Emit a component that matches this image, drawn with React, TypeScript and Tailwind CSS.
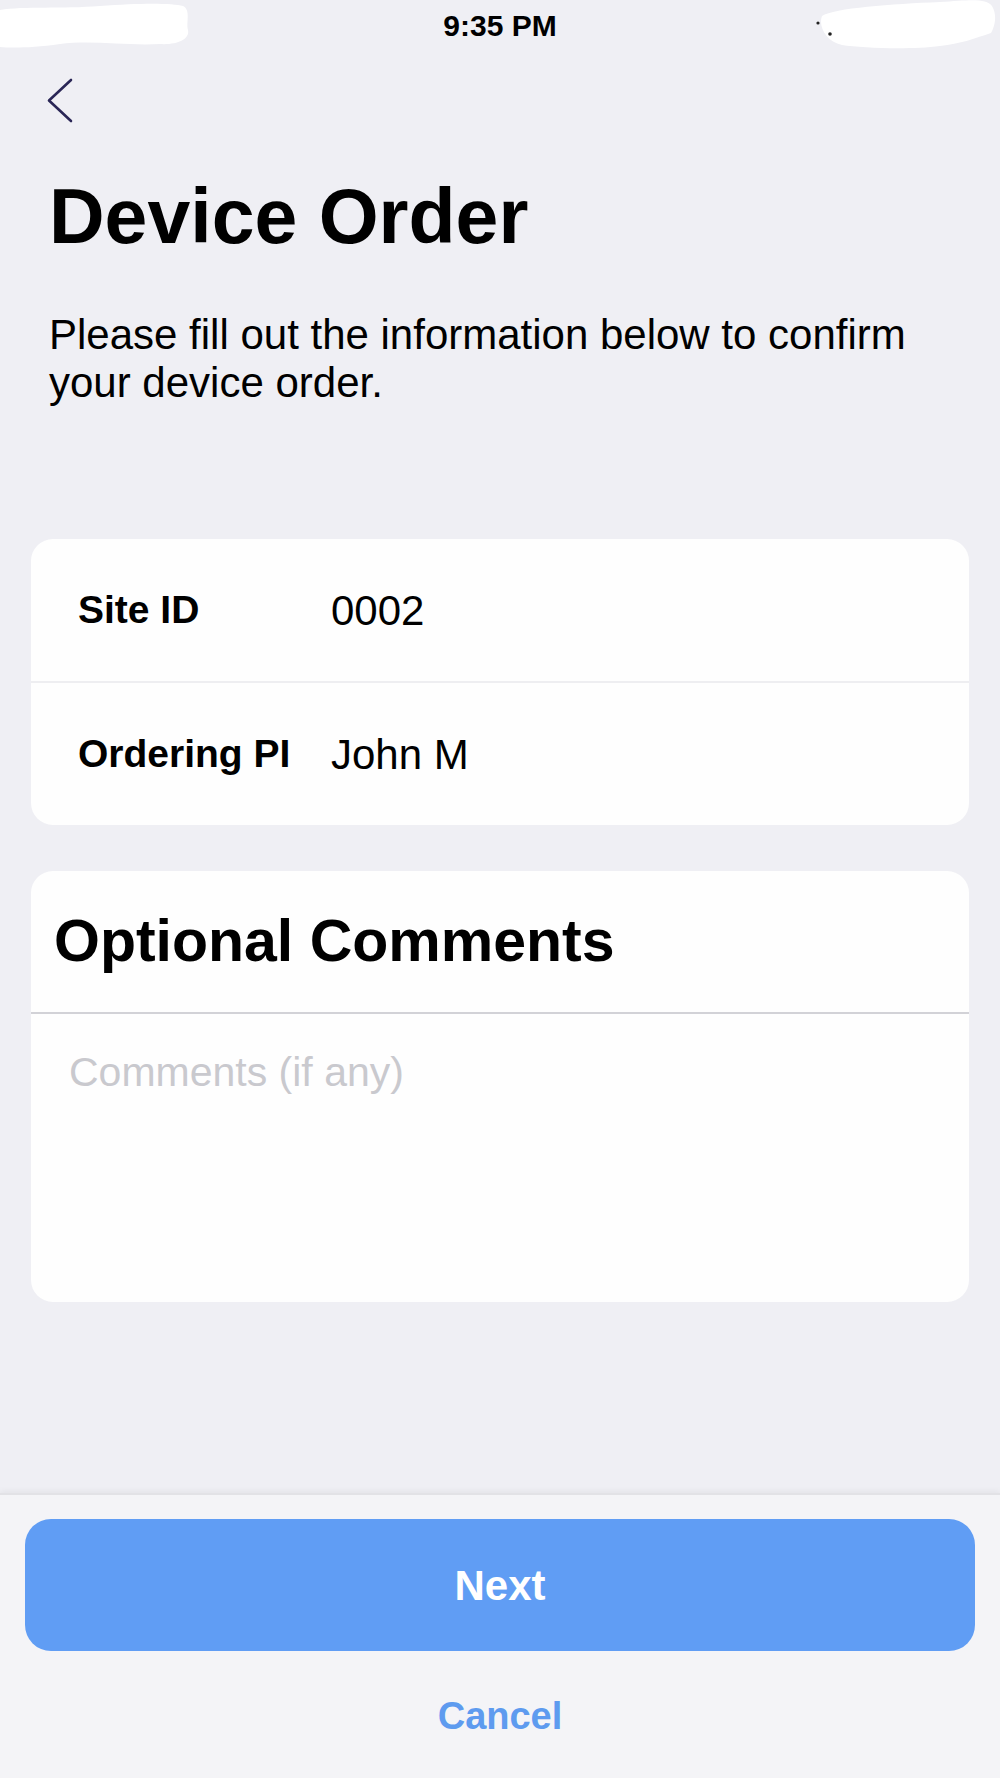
import { useState } from "react";

const ROWS = [
  { label: "Site ID", value: "0002" },
  { label: "Ordering PI", value: "John M" },
];

function BackChevron() {
  return (
    <svg width="28" height="46" viewBox="0 0 28 46" fill="none">
      <polyline points="24,2 2,22.5 24,43" stroke="#2a2656" strokeWidth="2.6" strokeLinecap="round" strokeLinejoin="round" />
    </svg>
  );
}

// the status bar had the carrier / battery blotted out in white
function StatusBar() {
  return (
    <div className="relative h-[50px] shrink-0 flex items-center justify-center">
      <svg className="absolute left-0 top-0" width="200" height="50" viewBox="0 0 200 50">
        <path d="M0 10 C24 6 62 9 100 6 C140 3 172 3 183 6 C191 10 186 22 188 30 C190 40 176 45 160 44 C128 46 92 40 60 44 C32 48 12 48 0 47 Z" fill="#ffffff" />
      </svg>
      <span className="text-[30px] font-semibold text-black leading-none pt-[2px]">9:35 PM</span>
      <svg className="absolute left-[800px] top-0" width="200" height="50" viewBox="0 0 200 50">
        <path d="M22 16 C34 8 92 4 140 2 C170 0 186 -2 192 6 C198 16 194 28 191 33 C176 38 160 44 140 46 C110 50 62 48 42 45 C26 42 18 26 22 16 Z" fill="#ffffff" />
        <circle cx="18" cy="23" r="1.6" fill="#222" />
        <circle cx="30" cy="34" r="1.8" fill="#222" />
      </svg>
    </div>
  );
}

export default function App() {
  const [comments, setComments] = useState("");

  return (
    <div className="w-[1000px] h-[1778px] flex flex-col bg-[#efeff4] text-black" style={{ fontFamily: "'Liberation Sans', Arial, sans-serif" }}>
      <StatusBar />

      {/* Content */}
      <div className="flex-1 flex flex-col">
        <button className="ml-[47px] mt-[28px] w-[28px] h-[46px] flex items-center">
          <BackChevron />
        </button>

        <h1 className="mt-[54px] px-[49px] text-[77px] font-bold leading-[77px]">Device Order</h1>

        <p className="mt-[56px] pl-[49px] pr-[50px] text-[42px] leading-[48px]">
          Please fill out the information below to confirm your device order.
        </p>

        {/* Details card */}
        <div className="mt-[132px] mx-[31px] bg-[#fefefe] rounded-[22px] overflow-hidden">
          {ROWS.map((r, i) => (
            <div key={r.label}>
              {i > 0 && <div className="h-[2px] bg-[#eeeef1]" />}
              <div className="h-[142px] flex items-center pl-[47px]">
                <span className="w-[253px] shrink-0 text-[39px] font-semibold">{r.label}</span>
                <span className="text-[42px]">{r.value}</span>
              </div>
            </div>
          ))}
        </div>

        {/* Comments card */}
        <div className="mt-[46px] mx-[31px] h-[431px] bg-[#fefefe] rounded-[22px] overflow-hidden flex flex-col">
          <div className="h-[141px] shrink-0 flex items-center pl-[23px]">
            <h2 className="text-[59px] font-bold leading-none">Optional Comments</h2>
          </div>
          <div className="h-[2px] shrink-0 bg-[#d2d2d7]" />
          <textarea
            value={comments}
            onChange={e => setComments(e.target.value)}
            placeholder="Comments (if any)"
            className="flex-1 w-full resize-none bg-transparent outline-none px-[38px] pt-[34px] text-[41px] leading-[48px] placeholder:text-[#c9c9ce]"
          />
        </div>
      </div>

      {/* Footer */}
      <div className="h-[285px] shrink-0 bg-[#f4f4f7] border-t-[2px] border-[#e2e2e6] shadow-[0_-2px_6px_rgba(0,0,0,0.05)] flex flex-col items-center px-[25px]">
        <button className="mt-[24px] w-full h-[132px] rounded-[26px] bg-[#609df4] text-white text-[42px] font-semibold">
          Next
        </button>
        <button className="mt-[46px] text-[38px] font-semibold text-[#5e9bef] leading-none">Cancel</button>
      </div>
    </div>
  );
}
